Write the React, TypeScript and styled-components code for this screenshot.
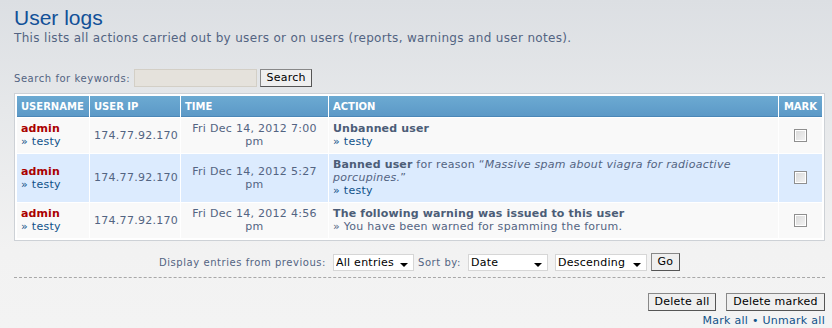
import React from "react";
import styled, { createGlobalStyle } from "styled-components";

const GlobalStyle = createGlobalStyle`
  html, body { margin: 0; padding: 0; }
  body {
    width: 832px;
    min-height: 328px;
    background: linear-gradient(to bottom, #dcdfe3 0px, #e6e8ea 110px, #f2f2f2 250px, #f3f3f3 100%);
    font-family: "DejaVu Sans", Verdana, sans-serif;
    font-size: 11px;
    color: #536482;
  }
  * { box-sizing: border-box; }
`;

const Page = styled.main`
  padding: 6px 7px 0 14px;
  height: 328px;
  overflow: hidden;
`;

const Title = styled.h1`
  margin: 0;
  font-family: "Liberation Sans", Arial, sans-serif;
  font-weight: normal;
  font-size: 21px;
  line-height: 24px;
  color: #115098;
`;

const Intro = styled.p`
  margin: 1px 0 0 0;
  font-size: 12px;
  letter-spacing: 0.33px;
  line-height: 15px;
  color: #536482;
`;

const SearchRow = styled.form`
  display: flex;
  align-items: center;
  margin-top: 23px;
  gap: 3px;
`;

const SmallLabel = styled.label`
  font-size: 10px;
  letter-spacing: 0.55px;
  color: #536482;
`;

const TextInput = styled.input`
  width: 123px;
  height: 18px;
  margin: 0 0 0 1px;
  border: 1px solid #d3cfc6;
  background: #e5e2dc;
  font-family: inherit;
  font-size: 11px;
`;

const Button = styled.button<{ $w?: number }>`
  height: 18px;
  ${(p) => (p.$w ? `width: ${p.$w}px;` : "")}
  padding: 0 4px;
  border: 1px solid #666;
  border-color: #888 #555 #555 #888;
  background: #efefef;
  font-family: "DejaVu Sans", Verdana, sans-serif;
  font-size: 11px;
  letter-spacing: 0.25px;
  line-height: 14px;
  color: #000;
  cursor: pointer;
`;

const TableBox = styled.div`
  margin-top: 6px;
  border: 1px solid #cdd1d6;
  background: #fff;
  padding: 1px;
`;

const Table = styled.table`
  width: 100%;
  table-layout: fixed;
  border-collapse: separate;
  border-spacing: 1px;
  background: #fff;
`;

const Th = styled.th<{ $center?: boolean }>`
  height: 21px;
  padding: 0 4px;
  text-align: ${(p) => (p.$center ? "center" : "left")};
  background: linear-gradient(to bottom, #6caad2 0%, #5c99c7 100%);
  border-bottom: 1px solid #4b87b7;
  color: #fff;
  font-size: 10px;
  font-weight: bold;
  text-transform: uppercase;
  white-space: nowrap;
`;

const Tr = styled.tr<{ $alt?: boolean }>`
  background: ${(p) => (p.$alt ? "#dcebfe" : "#f9f9f9")};
`;

const Td = styled.td<{ $align?: "left" | "center" }>`
  padding: 4px 4px 5px;
  vertical-align: middle;
  text-align: ${(p) => p.$align || "left"};
  line-height: 13px;
  font-size: 11px;
  letter-spacing: 0.28px;
  color: #536482;
`;

const AdminName = styled.strong`
  display: block;
  color: #aa0000;
  font-weight: bold;
  letter-spacing: 0.1px;
`;

const Link = styled.a`
  color: #105289;
  text-decoration: none;
`;

const ActionTitle = styled.strong`
  color: #4c5d77;
  font-weight: bold;
  letter-spacing: 0.15px;
`;

const Reason = styled.em`
  font-style: italic;
`;

const SubLine = styled.div`
  color: #536482;
`;

const Check = styled.input`
  appearance: none;
  -webkit-appearance: none;
  display: block;
  margin: 0 auto;
  width: 13px;
  height: 13px;
  border: 1px solid #8f8f8f;
  background: linear-gradient(135deg, #d8d8d8 0%, #f4f4f4 100%);
  box-shadow: inset 0 0 0 1px #fff;
`;

const FilterRow = styled.div`
  display: flex;
  justify-content: center;
  align-items: center;
  gap: 4px;
  margin-top: 12px;
`;

const SelectWrap = styled.div<{ $w: number }>`
  position: relative;
  width: ${(p) => p.$w}px;
  height: 17px;
  margin-left: 3px;
  background: #fff;
  border: 1px solid #d6d6d6;
  &::after {
    content: "";
    position: absolute;
    right: 5px;
    top: 8px;
    border-left: 4px solid transparent;
    border-right: 4px solid transparent;
    border-top: 4px solid #000;
  }
`;

const Select = styled.select`
  appearance: none;
  -webkit-appearance: none;
  width: 100%;
  height: 100%;
  border: 0;
  background: transparent;
  padding: 0 0 0 2px;
  font-family: "DejaVu Sans", Verdana, sans-serif;
  font-size: 11px;
  letter-spacing: 0.25px;
  color: #000;
  outline: none;
`;

const Divider = styled.hr`
  margin: 6px 0 0 0;
  border: 0;
  border-top: 1px dashed #a8a8a8;
  height: 0;
`;

const ButtonRow = styled.div`
  display: flex;
  justify-content: flex-end;
  gap: 10px;
  margin-top: 15px;
`;

const MarkLinks = styled.div`
  text-align: right;
  margin-top: 3px;
  line-height: 14px;
  letter-spacing: 0.28px;
  color: #105289;
`;

type Row = {
  time: string;
  action: React.ReactNode;
  sub: React.ReactNode;
};

const rows: Row[] = [
  {
    time: "Fri Dec 14, 2012 7:00 pm",
    action: <ActionTitle>Unbanned user</ActionTitle>,
    sub: <Link href="#">» testy</Link>,
  },
  {
    time: "Fri Dec 14, 2012 5:27 pm",
    action: (
      <>
        <ActionTitle>Banned user</ActionTitle> for reason “<Reason>Massive spam about viagra for radioactive</Reason>{" "}
        <Reason>porcupines.</Reason>”
      </>
    ),
    sub: <Link href="#">» testy</Link>,
  },
  {
    time: "Fri Dec 14, 2012 4:56 pm",
    action: <ActionTitle>The following warning was issued to this user</ActionTitle>,
    sub: <>» You have been warned for spamming the forum.</>,
  },
];

export default function App() {
  return (
    <>
      <GlobalStyle />
      <Page>
        <Title>User logs</Title>
        <Intro>This lists all actions carried out by users or on users (reports, warnings and user notes).</Intro>

        <SearchRow onSubmit={(e) => e.preventDefault()}>
          <SmallLabel htmlFor="kw">Search for keywords:</SmallLabel>
          <TextInput id="kw" type="text" />
          <Button type="submit" $w={52}>Search</Button>
        </SearchRow>

        <TableBox>
          <Table>
            <colgroup>
              <col style={{ width: 72 }} />
              <col style={{ width: 90 }} />
              <col style={{ width: 147 }} />
              <col />
              <col style={{ width: 43 }} />
            </colgroup>
            <thead>
              <tr>
                <Th>Username</Th>
                <Th>User IP</Th>
                <Th>Time</Th>
                <Th>Action</Th>
                <Th $center>Mark</Th>
              </tr>
            </thead>
            <tbody>
              {rows.map((r, i) => (
                <Tr key={i} $alt={i === 1}>
                  <Td>
                    <AdminName>admin</AdminName>
                    <Link href="#">» testy</Link>
                  </Td>
                  <Td $align="center">174.77.92.170</Td>
                  <Td $align="center">{r.time}</Td>
                  <Td>
                    <div>{r.action}</div>
                    <SubLine>{r.sub}</SubLine>
                  </Td>
                  <Td $align="center">
                    <Check type="checkbox" />
                  </Td>
                </Tr>
              ))}
            </tbody>
          </Table>
        </TableBox>

        <FilterRow>
          <SmallLabel>Display entries from previous:</SmallLabel>
          <SelectWrap $w={81}>
            <Select defaultValue="all">
              <option value="all">All entries</option>
            </Select>
          </SelectWrap>
          <SmallLabel>Sort by:</SmallLabel>
          <SelectWrap $w={80}>
            <Select defaultValue="date">
              <option value="date">Date</option>
            </Select>
          </SelectWrap>
          <SelectWrap $w={92}>
            <Select defaultValue="desc">
              <option value="desc">Descending</option>
            </Select>
          </SelectWrap>
          <Button type="button" $w={29}>Go</Button>
        </FilterRow>

        <Divider />

        <ButtonRow>
          <Button type="button" $w={68}>Delete all</Button>
          <Button type="button" $w={99}>Delete marked</Button>
        </ButtonRow>
        <MarkLinks>
          <Link href="#">Mark all</Link> • <Link href="#">Unmark all</Link>
        </MarkLinks>
      </Page>
    </>
  );
}
